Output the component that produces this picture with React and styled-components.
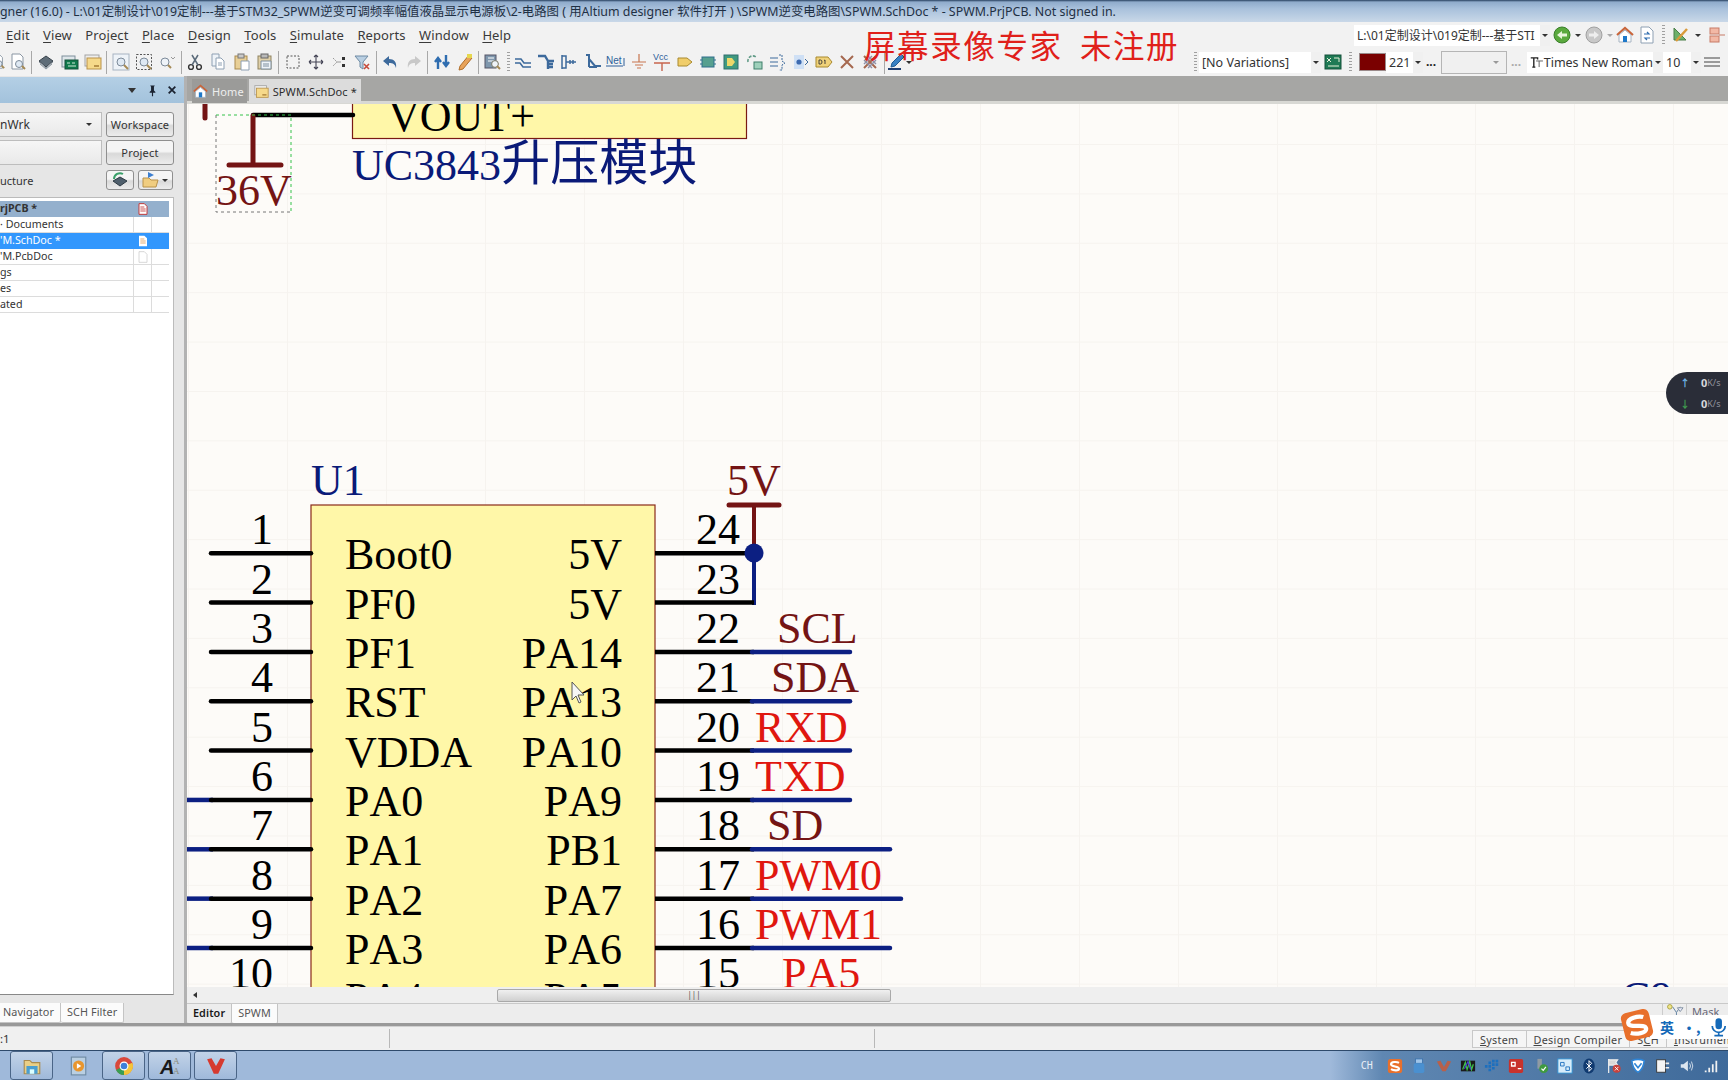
import React from "react";
import styled, { createGlobalStyle } from "styled-components";

const uiFont = `"Noto Sans", "Noto Sans CJK SC", sans-serif`;

const GlobalStyle = createGlobalStyle`
  html, body { margin: 0; padding: 0; background: #f0f0f0; }
  body { font-family: ${uiFont}; }
`;

const Win = styled.div`
  position: relative;
  display: flex;
  flex-direction: column;
  width: 1728px;
  height: 1080px;
  overflow: hidden;
  color: #2b2b2b;
`;

const TitleBar = styled.div`
  height: 22px;
  flex: none;
  line-height: 23px;
  font-size: 12.4px;
  white-space: nowrap;
  color: #1f3044;
  background: linear-gradient(#27405f 0, #8fabcb 2px, #a9c1dc 40%, #c9d8e8 100%);
`;

const Row = styled.div`
  display: flex;
  flex: none;
  align-items: center;
  height: ${(p) => p.$h}px;
  background: #f2f2f2;
  white-space: nowrap;
  overflow: hidden;
`;

const Menu = styled.div`
  display: flex;
  gap: 13.4px;
  padding-left: 6px;
  font-size: 13px;
  letter-spacing: 0.1px;
  color: #3a3a3a;
  & u { text-underline-offset: 2px; }
`;

const RightTools = styled.div`
  display: flex;
  align-items: center;
  flex: none;
  margin-left: auto;
  width: ${(p) => p.$w}px;
`;

const Slot = styled.span`
  display: inline-flex;
  flex: none;
  align-items: center;
  justify-content: center;
  width: ${(p) => p.$w || 23.15}px;
  height: 22px;
`;

const Icons = styled.div`
  display: flex;
  align-items: center;
  margin-left: ${(p) => p.$ml || 0}px;
`;

const Sep = styled.span`
  flex: none;
  width: 1px;
  height: 23px;
  margin: 0 2px;
  background: #a8a8a8;
`;

const Grip = styled.span`
  flex: none;
  width: 3px;
  height: 20px;
  margin: 0 ${(p) => p.$m || 3}px;
  background: repeating-linear-gradient(#a0a0a0 0 1px, transparent 1px 3px);
`;

const Field = styled.div`
  display: flex;
  align-items: center;
  flex: none;
  width: ${(p) => p.$w}px;
  height: 21px;
  background: #fff;
  font-size: ${(p) => p.$fs || 12.5}px;
  color: #333;
  overflow: hidden;
  padding-left: 3px;
  box-sizing: border-box;
`;

const FieldArrow = styled.span`
  display: flex;
  align-items: center;
  justify-content: center;
  flex: none;
  width: 10px;
  height: 100%;
  margin-left: auto;
  background: #f0f0f0;
  &::after {
    content: "";
    border-left: 3px solid transparent;
    border-right: 3px solid transparent;
    border-top: 3px solid #333;
  }
`;

const Caret = styled.span`
  flex: none;
  width: 0;
  height: 0;
  margin: 0 ${(p) => p.$m || 3}px;
  border-left: 3px solid transparent;
  border-right: 3px solid transparent;
  border-top: 3px solid ${(p) => p.$c || "#333"};
`;

const DockCaret = styled(Caret)`
  border-left-width: 4px;
  border-right-width: 4px;
  border-top-width: 5px;
`;

const Swatch = styled.span`
  flex: none;
  width: 27px;
  height: 18px;
  margin-left: 3px;
  background: #7a0000;
  border: 1px solid #9a8a8a;
  box-sizing: border-box;
`;

const Dots = styled.span`
  flex: none;
  width: 12px;
  margin: 0 ${(p) => p.$m || 4}px;
  font-size: 12px;
  font-weight: 700;
  line-height: 10px;
  color: ${(p) => p.$c || "#222"};
`;

const EmptyCombo = styled.div`
  display: flex;
  align-items: center;
  justify-content: flex-end;
  flex: none;
  width: 66px;
  height: 23px;
  padding-right: 4px;
  box-sizing: border-box;
  background: #f0f0f0;
  border: 1px solid #b5b5b5;
`;

const Watermark = styled.div`
  position: absolute;
  left: 864px;
  top: 25px;
  font-family: "Noto Sans CJK SC", serif;
  font-size: 31.5px;
  line-height: 38px;
  letter-spacing: 1.6px;
  color: #e0201a;
  white-space: pre;
`;

const Workspace = styled.div`
  display: flex;
  flex: 1;
  min-height: 0;
`;

const Dock = styled.div`
  display: flex;
  flex-direction: column;
  flex: none;
  width: 184px;
  background: #e6e6e6;
  border-right: 3px solid #b2b2b2;
`;

const DockHead = styled.div`
  display: flex;
  flex: none;
  align-items: center;
  justify-content: flex-end;
  gap: 7px;
  height: 26px;
  margin-top: 1px;
  padding-right: 6px;
  background: linear-gradient(#b4cfe5, #a3c2dc);
  color: #1a2230;
  font-size: 12px;
  font-weight: 700;
`;

const DockBody = styled.div`
  display: flex;
  flex-direction: column;
  flex: 1;
  min-height: 0;
  padding-top: 9px;
`;

const DockLine = styled.div`
  display: flex;
  flex: none;
  align-items: center;
  gap: 4px;
  height: 25px;
  margin-bottom: 3px;
  width: 174px;
`;

const PanelInput = styled.div`
  display: flex;
  flex: none;
  align-items: center;
  justify-content: space-between;
  box-sizing: border-box;
  width: 102px;
  height: 100%;
  padding-right: 6px;
  background: linear-gradient(#f6f6f6, #e9e9e9);
  border: 1px solid #bdbdbd;
  border-left: 0;
  font-size: 12px;
  color: #333;
`;

const PanelButton = styled.div`
  display: flex;
  flex: none;
  align-items: center;
  justify-content: center;
  box-sizing: border-box;
  width: ${(p) => p.$w || 68}px;
  height: 100%;
  border: 1px solid #8f8f8f;
  border-radius: 3px;
  background: linear-gradient(#f5f5f5 45%, #d9d9d9 55%, #ececec);
  font-size: 11px;
  letter-spacing: 0.2px;
  color: #333;
`;

const StructLine = styled(DockLine)`
  height: 20px;
  margin: 2px 0 7px;
  font-size: 11px;
  color: #333;
`;

const StructLabel = styled.span`
  flex: none;
  width: 102px;
`;

const ListBox = styled.div`
  flex: 1;
  width: 174px;
  box-sizing: border-box;
  padding-top: 3px;
  background: #fff;
  border-top: 1px solid #bbb;
  border-right: 1px solid #bbb;
  border-bottom: 1px solid #888;
  min-height: 0;
`;

const ListRow = styled.div`
  display: grid;
  grid-template-columns: 133px 18px 18px;
  width: 169px;
  height: 16px;
  box-sizing: border-box;
  line-height: 15px;
  font-size: 10.7px;
  font-weight: ${(p) => (p.$head ? 700 : 400)};
  color: ${(p) => (p.$sel ? "#fff" : "#333")};
  background: ${(p) => (p.$sel ? "#3297fd" : p.$head ? "#94b0cd" : "#fff")};
  border-bottom: 1px solid ${(p) => (p.$head || p.$sel ? "transparent" : "#dcdcdc")};
`;

const ListCell = styled.span`
  display: flex;
  align-items: center;
  justify-content: center;
  border-left: 1px solid ${(p) => (p.$plain ? "transparent" : "#dcdcdc")};
`;

const TabRow = styled.div`
  display: flex;
  flex: none;
  height: 20px;
  margin-top: 8px;
  margin-left: -3px;
  background: ${(p) => p.$bg || "#e6e6e6"};
`;

const BottomTab = styled.div`
  padding: 0 6px;
  height: 19px;
  line-height: 18px;
  font-size: 10.8px;
  letter-spacing: 0.1px;
  color: ${(p) => (p.$on ? "#1a1a1a" : "#555")};
  font-weight: ${(p) => (p.$on ? 600 : 400)};
  background: ${(p) => (p.$on ? "#ededed" : "#fbfbfb")};
  border-right: 1px solid #c4c4c4;
  border-bottom: 1px solid #c4c4c4;
  border-radius: 0 0 2px 2px;
`;

const Editor = styled.div`
  display: flex;
  flex-direction: column;
  flex: 1;
  min-width: 0;
  background: #ededed;
`;

const DocTabs = styled.div`
  display: flex;
  flex: none;
  align-items: flex-end;
  height: 28px;
  padding: 0 0 1px 5px;
  box-sizing: border-box;
  background: linear-gradient(#a6a6a4 90%, #d8d8d4 90%);
`;

const DocTab = styled.div`
  display: flex;
  align-items: center;
  gap: 4px;
  height: 24px;
  margin-right: 2px;
  padding: 0 ${(p) => (p.$on ? 4 : 3)}px 0 ${(p) => (p.$on ? 5 : 1)}px;
  font-size: 11px;
  letter-spacing: 0.1px;
  color: ${(p) => (p.$on ? "#2c2c2c" : "#eee")};
  background: ${(p) => (p.$on ? "#dcdcdc" : "#9b9b99")};
`;

const Canvas = styled.div`
  position: relative;
  flex: 1;
  min-height: 0;
  overflow: hidden;
  background-color: #fdfbf8;
  background-image:
    linear-gradient(90deg, #f6f3ef 1px, transparent 1px),
    linear-gradient(#f6f3ef 1px, transparent 1px);
  background-size: 99px 49.4px;
  background-position: 1px 40px;
`;

const Sheet = styled.svg`
  display: block;
  width: 100%;
  height: 100%;
`;

const Txt = styled.text`
  font-family: "Liberation Serif", "Noto Sans CJK SC", serif;
  font-size: ${(p) => p.$size || 44}px;
  font-kerning: none;
  fill: ${(p) => p.$c || "#000"};
  text-anchor: ${(p) => p.$anchor || "start"};
`;

const ScrollRow = styled.div`
  display: flex;
  flex: none;
  align-items: center;
  height: 16px;
  padding-left: 6px;
  border-bottom: 1px solid #c9c9c9;
  background: #efefef;
`;

const ScrollArrow = styled.span`
  flex: none;
  width: 0;
  height: 0;
  margin-right: 300px;
  border-top: 3px solid transparent;
  border-bottom: 3px solid transparent;
  border-right: 4px solid #333;
`;

const ScrollThumb = styled.div`
  display: flex;
  align-items: center;
  justify-content: center;
  flex: none;
  width: 394px;
  height: 13px;
  box-sizing: border-box;
  border: 1px solid #a9a9a9;
  border-radius: 2px;
  background: linear-gradient(#f0f0f0, #d0d0d0);
  font-size: 8px;
  line-height: 10px;
  color: #555;
`;

const EditorTabs = styled(TabRow)`
  margin: 0;
  background: #ededed;
  height: 19px;
  align-items: flex-start;
`;

const MaskFilter = styled.div`
  display: flex;
  align-items: center;
  margin-left: auto;
  height: 17px;
  padding: 0 2px 0 4px;
  border-left: 1px solid #ccc;
`;

const Mask = styled.div`
  flex: none;
  width: 36px;
  height: 17px;
  line-height: 16px;
  padding-left: 5px;
  font-size: 11px;
  color: #667;
  border-left: 1px solid #ccc;
  overflow: hidden;
`;

const SplitLine = styled.div`
  flex: none;
  height: 4px;
  background: linear-gradient(#999 0 75%, #d0d0d0 75%);
`;

const StatusBar = styled.div`
  display: flex;
  flex: none;
  align-items: center;
  height: 23px;
  background: #f0f0f0;
  font-size: 11.5px;
  color: #333;
`;

const StatusCell = styled.div`
  flex: none;
  box-sizing: border-box;
  width: ${(p) => p.$w}px;
  height: 19px;
  line-height: 19px;
  border-right: 1px solid #b8b8b8;
`;

const StatusTabs = styled.div`
  display: flex;
  flex: none;
  margin-left: auto;
  height: 18px;
  overflow: hidden;
  width: 256px;
`;

const StatusTab = styled.div`
  flex: none;
  padding: 0 7px;
  line-height: 17px;
  font-size: 10.8px;
  letter-spacing: 0.3px;
  color: #444;
  background: #f5f5f5;
  border: 1px solid #c8c8c8;
  border-left-width: ${(p) => (p.$first ? 1 : 0)}px;
`;

const Taskbar = styled.div`
  display: flex;
  flex: none;
  align-items: center;
  height: 30px;
  padding-left: 10px;
  box-sizing: border-box;
  border-top: 1px solid #2e4a6b;
  background: linear-gradient(90deg, #9fb9da 0, #9fb9da 77%, #5f87b2 80%, #3f6a9a 100%);
`;

const TaskButton = styled.div`
  display: flex;
  align-items: center;
  justify-content: center;
  flex: none;
  box-sizing: border-box;
  width: 43px;
  height: 29px;
  margin-right: 3px;
  border-radius: 3px;
  border: 1px solid ${(p) => (p.$flat ? "transparent" : "#4a6587")};
  background: ${(p) => (p.$flat ? "transparent" : "linear-gradient(#c2d3e8, #9fb9da)")};
`;

const Tray = styled.div`
  display: flex;
  align-items: center;
  margin-left: auto;
  padding-right: 5px;
`;

const TrayText = styled.span`
  display: inline-block;
  width: 22px;
  font-family: "DejaVu Sans Mono", monospace;
  font-size: 10px;
  color: #e8eef6;
`;

const TraySlot = styled(Slot)`
  width: 24.3px;
`;

const Speed = styled.div`
  position: absolute;
  left: 1666px;
  top: 372px;
  width: 70px;
  height: 42px;
  display: grid;
  grid-template-rows: 1fr 1fr;
  padding-left: 14px;
  box-sizing: border-box;
  border-radius: 21px 0 0 21px;
  background: #2a2d38;
  color: #d8d8dc;
`;

const SpeedRow = styled.div`
  display: flex;
  align-items: center;
  font-size: 11px;
  font-weight: 700;
  & small {
    font-size: 9px;
    font-weight: 400;
    color: #8f929c;
  }
`;

const SpeedArrow = styled.span`
  flex: none;
  width: 21px;
  font-size: 10px;
  color: ${(p) => p.$c};
`;

const Sogou = styled.div`
  position: absolute;
  left: 1650px;
  top: 1015px;
  display: flex;
  align-items: center;
  gap: 8px;
  box-sizing: border-box;
  width: 78px;
  height: 24px;
  padding-left: 10px;
  background: #fff;
  font-family: "Noto Sans CJK SC", sans-serif;
  font-size: 14px;
  font-weight: 700;
  color: #1469b8;
`;

const SogouLogo = styled.div`
  position: absolute;
  left: 1621px;
  top: 1009px;
  width: 32px;
  height: 32px;
  transform: rotate(-14deg);
`;

const S = ({ s = 18, children, vb = "0 0 18 18" }) => (
  <svg width={s} height={s} viewBox={vb} fill="none">
    {children}
  </svg>
);

const magnifier = (
  <>
    <circle cx="9" cy="9" r="4" fill="#dfe9f3" stroke="#7c8a99" />
    <path d="M12 12l4 4" stroke="#a58a55" strokeWidth="2" />
  </>
);

// toolbar and tray drawings, keyed by name
const icons = {
  page: (
    <>
      <path d="M3 1h8l3 3v12H3z" fill="#fff" stroke="#8a96a3" />
      <circle cx="10" cy="11" r="3.5" fill="#dfe9f3" stroke="#7c8a99" />
      <path d="M13 13l3 3" stroke="#a58a55" strokeWidth="2" />
    </>
  ),
  chip: (
    <>
      <path d="M9 3l7 5-7 6-7-6z" fill="#5f6d78" stroke="#39434c" />
      <path d="M2 9l7 6 7-6M3 11l6 5 6-5" stroke="#8d98a1" />
    </>
  ),
  pcb: (
    <>
      <rect x="1" y="3" width="13" height="11" fill="#dfe6ea" stroke="#7f8f9b" />
      <rect x="4" y="7" width="13" height="9" fill="#0f7a4c" stroke="#14503a" />
      <path d="M6 10h3M11 10h3M7 13h8" stroke="#cfe9d8" />
    </>
  ),
  sheets: (
    <>
      <rect x="1" y="2" width="14" height="11" fill="#eee" stroke="#a3a3a3" />
      <rect x="3" y="5" width="14" height="11" fill="#f6d98a" stroke="#b9924a" />
      <path d="M10 12h5v2h-5z" fill="#b9924a" />
    </>
  ),
  zoom: (
    <>
      <rect x="1" y="1" width="16" height="16" fill="#eef3f8" stroke="#a7b4c2" />
      {magnifier}
    </>
  ),
  zoomSel: (
    <>
      <rect x="1.5" y="1.5" width="15" height="15" stroke="#555" strokeDasharray="2 1.5" />
      {magnifier}
    </>
  ),
  zoomAlt: (
    <>
      <circle cx="7" cy="9" r="4" fill="#eef3f8" stroke="#7c8a99" />
      <path d="M10 12l3 3" stroke="#a58a55" strokeWidth="2" />
      <path d="M13 4l2 2 2-2" stroke="#999" />
    </>
  ),
  cut: (
    <>
      <circle cx="5" cy="14" r="2.4" stroke="#333" strokeWidth="1.4" />
      <circle cx="13" cy="14" r="2.4" stroke="#333" strokeWidth="1.4" />
      <path d="M6 12L12 2M12 12L6 2" stroke="#5b6b7a" strokeWidth="1.5" />
    </>
  ),
  copy: (
    <>
      <path d="M3 1h7v12H3z" fill="#eef3f8" stroke="#8ea0b3" />
      <path d="M7 5h5l3 3v8H7z" fill="#fff" stroke="#8ea0b3" />
      <path d="M9 10h4M9 12h4" stroke="#8ea0b3" />
    </>
  ),
  paste: (
    <>
      <rect x="2" y="3" width="12" height="13" fill="#e8cf96" stroke="#a98a4e" />
      <rect x="5" y="1" width="6" height="4" fill="#c9c9c9" stroke="#777" />
      <path d="M8 8h8v9H8z" fill="#fff" stroke="#8ea0b3" />
    </>
  ),
  paste2: (
    <>
      <rect x="2" y="3" width="13" height="13" fill="#e0d0a8" stroke="#8f8360" />
      <rect x="5" y="1" width="7" height="4" fill="#b9b9b9" stroke="#666" />
      <path d="M5 8h10v8H5z" fill="#eef3f8" stroke="#7f8f9f" />
      <path d="M7 11h6M7 13h6" stroke="#7f8f9f" />
    </>
  ),
  select: <rect x="3" y="3" width="12" height="12" stroke="#555" strokeDasharray="2 1.5" />,
  move: (
    <path
      d="M9 2v14M2 9h14M9 2l-2 2M9 2l2 2M9 16l-2-2M9 16l2-2M2 9l2-2M2 9l2 2M16 9l-2-2M16 9l-2 2"
      stroke="#445"
      strokeWidth="1.1"
    />
  ),
  selMove: (
    <>
      <path d="M3 5l4 4-4 4" stroke="#999" strokeDasharray="2 1" />
      <path d="M7 9h4" stroke="#999" />
      <rect x="12" y="4" width="3" height="3" fill="#333" />
      <rect x="12" y="11" width="3" height="3" fill="#333" />
    </>
  ),
  filter: (
    <>
      <path d="M2 3h13l-5 6v7l-3-2V9z" fill="#b9cfe2" stroke="#6e8aa3" />
      <path d="M11 11l5 5M16 11l-5 5" stroke="#c74a3a" strokeWidth="1.6" />
    </>
  ),
  undo: <path d="M8 3L2 8l6 5v-3c4 0 6 1 7 5 1-6-2-9-7-9z" fill="#3d6a9c" />,
  redo: <path d="M10 3l6 5-6 5v-3c-4 0-6 1-7 5-1-6 2-9 7-9z" fill="#c8c8c8" />,
  updown: (
    <>
      <path d="M5 16V6M2 9l3-4 3 4" stroke="#2f6db0" strokeWidth="2.4" />
      <path d="M13 2v10M10 9l3 4 3-4" stroke="#2f6db0" strokeWidth="2.4" />
    </>
  ),
  pencil: (
    <>
      <path d="M13 2l3 3-9 11-4 1 1-4z" fill="#e8a35a" stroke="#b06f2b" />
      <rect x="11" y="1" width="5" height="4" fill="#e6d84f" />
    </>
  ),
  inspect: (
    <>
      <rect x="1" y="2" width="11" height="13" fill="#7f97ad" stroke="#556" />
      <path d="M4 5h6M4 8h6" stroke="#fff" />
      <circle cx="11" cy="11" r="3.4" fill="#eef3f8" stroke="#776" />
      <path d="M13 13l3 3" stroke="#a58a55" strokeWidth="2" />
    </>
  ),
  wire: <path d="M1 6h6l3 4h7M1 10h5l3 4h8" stroke="#3d6a9c" strokeWidth="1.6" />,
  bus: <path d="M1 3h7l3 5v8M11 8h6M11 11h5M11 14h5" stroke="#3d6a9c" strokeWidth="2.4" />,
  harness: <path d="M2 2v14M2 3h4v12H2M6 9h10M10 7v4M13 7v4" stroke="#3d6a9c" strokeWidth="1.5" />,
  busEntry: <path d="M2 2h3v12M5 6l6 7h6M5 14h8" stroke="#3d6a9c" strokeWidth="2" />,
  gnd: <path d="M9 1v8M2 9h14M5 12h8M7 15h4" stroke="#c7754e" strokeWidth="1.2" />,
  port: <path d="M2 5h9l5 4-5 4H2z" fill="#f0cd6a" stroke="#a98a2f" />,
  sheet: (
    <>
      <rect x="3" y="4" width="12" height="10" fill="#57a08f" stroke="#2f6f8c" />
      <path d="M1 7h2M1 11h2M15 7h2M15 11h2" stroke="#2f6f8c" />
    </>
  ),
  sheetPort: (
    <>
      <rect x="2" y="2" width="14" height="14" fill="#3f9a7f" stroke="#2f6f6f" />
      <path d="M5 5h5l3 4-3 4H5z" fill="#ecd86a" />
    </>
  ),
  recycle: (
    <>
      <path d="M2 9a5 5 0 0 1 8-5" stroke="#5f9a86" strokeWidth="1.6" strokeDasharray="3 1.4" />
      <rect x="8" y="9" width="8" height="7" fill="#9fd0bb" stroke="#3e7f6a" />
    </>
  ),
  entries: (
    <>
      <path d="M1 5h8M1 9h8M1 13h8" stroke="#3d6a9c" />
      <path d="M10 2h3v6l3 2-3 2v5h-3" stroke="#3d6a9c" strokeDasharray="2 1" />
    </>
  ),
  dotPort: (
    <>
      <rect x="2" y="2" width="10" height="14" fill="#cfe0f5" />
      <circle cx="7" cy="9" r="2.6" fill="#3d6ab0" />
      <path d="M13 6l3 3-3 3" stroke="#3d6a9c" />
    </>
  ),
  device: (
    <>
      <path d="M1 4h12l4 5-4 5H1z" fill="#f0d27a" stroke="#a98a2f" />
      <path d="M4 7v4h1.5q1.5 0 1.5-2t-1.5-2zM9 7.5l1-.5v4" stroke="#333" strokeWidth=".9" />
    </>
  ),
  cross: <path d="M3 3l12 12M15 3L3 15" stroke="#a5684f" strokeWidth="2" />,
  crossAll: (
    <>
      <path d="M3 3l12 12M15 3L3 15" stroke="#a5684f" strokeWidth="2" />
      <path d="M3 7l8 8M7 3l8 8M15 7l-8 8M11 3L3 11" stroke="#8f8fa5" strokeWidth="1.4" />
    </>
  ),
  pen: (
    <>
      <path d="M14 1l3 3-9 9-4 1 1-4z" fill="#3a82c4" stroke="#1f5b93" />
      <path d="M1 16h13" stroke="#1f3f73" strokeWidth="2" />
    </>
  ),
  back: (
    <>
      <circle cx="9" cy="9" r="8" fill="#5aa93e" stroke="#3a7f2a" />
      <path d="M4 9l5-4v2.5h5v3H9V13z" fill="#e8f5dc" />
    </>
  ),
  forward: (
    <>
      <circle cx="9" cy="9" r="8" fill="#c8c8c8" stroke="#a0a0a0" />
      <path d="M14 9L9 5v2.5H4v3h5V13z" fill="#eee" />
    </>
  ),
  home: (
    <>
      <path d="M1 9l8-7 8 7" stroke="#c9653a" strokeWidth="2.2" />
      <path d="M3 9v7h12V9L9 4z" fill="#fff" stroke="#a7b4c2" />
      <rect x="7" y="10" width="4" height="6" fill="#1e78c8" />
    </>
  ),
  sync: (
    <>
      <path d="M3 1h8l4 4v12H3z" fill="#fff" stroke="#8ea0b3" />
      <path d="M6 8h5l-2-2M12 12H7l2 2" stroke="#2f6db0" strokeWidth="1.2" />
    </>
  ),
  ruler: (
    <>
      <path d="M3 2l12 12H3z" fill="#6db06a" stroke="#4a7f48" />
      <path d="M5 15L16 3" stroke="#d99a3a" strokeWidth="2.5" />
    </>
  ),
  split: (
    <>
      <rect x="3" y="2" width="9" height="6" fill="#f2b8a5" stroke="#c77b66" />
      <rect x="3" y="10" width="9" height="6" fill="#f2b8a5" stroke="#c77b66" />
      <path d="M12 9h6" stroke="#c77b66" />
    </>
  ),
  variant: (
    <>
      <rect x="1" y="2" width="16" height="14" fill="#1f7a55" stroke="#14503a" />
      <path d="M3 5l4 4M7 5L3 9M10 5h5v4M4 13h11" stroke="#e8f0d8" />
    </>
  ),
  lines: <path d="M1 5h16M1 9h16M1 13h16" stroke="#9a9a9a" strokeWidth="1.8" />,
  font: (
    <>
      <path d="M1 3h9v2M5 3v12M3 15h4" stroke="#222" strokeWidth="1.8" />
      <path d="M8 7h9M12 7v8" stroke="#666" strokeWidth="1.3" />
    </>
  ),
  docRed: (
    <>
      <path d="M3 1h8l4 4v12H3z" fill="#fff" stroke="#c23b3b" strokeWidth="1.5" />
      <path d="M5 6h6M5 9h8M5 12h8" stroke="#c23b3b" strokeWidth="1.3" />
    </>
  ),
  docWhite: (
    <>
      <path d="M3 1h8l4 4v12H3z" fill="#fff" />
      <path d="M5 6h6M5 9h8M5 12h8" stroke="#e0a060" strokeWidth="1.3" />
    </>
  ),
  docBlank: <path d="M3 1h8l4 4v12H3z" fill="#fff" stroke="#c4c4c4" />,
  chipBtn: (
    <>
      <path d="M9 6l7 4-7 5-7-5z" fill="#4f5f6c" stroke="#2e3a44" />
      <path d="M3 8a6 6 0 0 1 9-5" stroke="#3aa06a" strokeWidth="2" />
    </>
  ),
  folderBlue: (
    <>
      <path d="M1 7h6l2 2h7l-2 7H1z" fill="#f0cd80" stroke="#b9924a" />
      <path d="M6 1v6l6-3z" fill="#3d7fd0" />
    </>
  ),
  pin: <path d="M6 2h6v1h-1v6l2 2v1H5v-1l2-2V3H6zM8.2 12h1.6v5H8.2z" fill="#1a2230" />,
  close: <path d="M4 4l10 10M14 4L4 14" stroke="#1a2230" strokeWidth="2.6" />,
  filterDot: (
    <>
      <circle cx="3" cy="3" r="2.4" fill="#f0e68a" stroke="#a9a040" />
      <path d="M6 3l4 6v6M10 9l4-6" stroke="#5f7f9f" />
      <path d="M11 4h6l-3 4z" fill="#eef" stroke="#7f8f9f" />
    </>
  ),
  folder: (
    <>
      <path d="M2 4h5l2 2h7v10H2z" fill="#e9cf87" stroke="#a98a4e" />
      <rect x="4" y="9" width="10" height="7" fill="#4a9ed0" />
      <rect x="7" y="12" width="4" height="4" fill="#dff" />
    </>
  ),
  media: (
    <>
      <rect x="3" y="1" width="13" height="16" fill="#b9cfe2" stroke="#6e8aa3" />
      <circle cx="9.5" cy="9" r="5" fill="#e8962e" />
      <path d="M8 6.5l4 2.5-4 2.500z" fill="#fff" />
    </>
  ),
  chrome: (
    <>
      <circle cx="9" cy="9" r="8" fill="#d9483b" />
      <path d="M9 9L1.8 12.5A8 8 0 0 0 9 17z" fill="#3a9e52" />
      <path d="M9 9v8a8 8 0 0 0 7.5-11z" fill="#f3c53a" />
      <circle cx="9" cy="9" r="3.5" fill="#3f7fd8" stroke="#fff" />
    </>
  ),
  wps: <path d="M1 3l4-1 4 7 4-7 4 1-6 13H7z" fill="#d63a2f" />,
  sogou: (
    <>
      <rect x="1" y="1" width="16" height="16" rx="3" fill="#e8702c" />
      <path d="M13.500 5.500C11 4 4.500 4 4.500 7S13.500 9 13.500 12 7 14 4.500 12.500" stroke="#fff" strokeWidth="2.400" />
    </>
  ),
  usb: (
    <>
      <rect x="5" y="1" width="8" height="5" fill="#9fc4e8" stroke="#3d74ad" />
      <rect x="3" y="6" width="12" height="11" rx="2" fill="#4a90d0" />
    </>
  ),
  wpsTray: <path d="M1 4l4-1 4 7 4-7 4 1-6 11H7z" fill="#b8604a" />,
  color: (
    <>
      <rect x="1" y="3" width="16" height="12" fill="#1a1a1a" />
      <path d="M3 13L6 5l2 8 3-9 2 9 2-6" stroke="#3fc04f" strokeWidth="1.4" />
      <path d="M5 12l4-8 3 9" stroke="#4a3fd0" strokeWidth="1.4" />
    </>
  ),
  grid: (
    <path
      d="M5 4h3v3H5zM9 2h3v3H9zM13 2h3v3h-3zM1 8h3v3H1zM5 8h3v3H5zM9 6h3v3H9zM13 6h3v3h-3zM5 12h3v3H5zM9 10h3v3H9z"
      fill="#1c6fbe"
    />
  ),
  redApp: (
    <>
      <rect x="1" y="1" width="16" height="16" rx="2" fill="#c8322c" />
      <path d="M4 5h4v4H4zM11 12h4" stroke="#fff" strokeWidth="1.5" />
    </>
  ),
  usbCheck: (
    <>
      <rect x="5" y="1" width="5" height="11" fill="#8f9aa3" />
      <circle cx="12" cy="12" r="5" fill="#3f9a3f" />
      <path d="M9.5 12l2 2 3-4" stroke="#fff" strokeWidth="1.3" />
    </>
  ),
  blueBox: (
    <>
      <rect x="1" y="1" width="16" height="16" fill="#d7ecfa" stroke="#2d8fd0" />
      <path d="M4 5h4v4H4zM10 10h4v4h-4z" stroke="#1c6fbe" />
    </>
  ),
  bluetooth: (
    <>
      <ellipse cx="9" cy="9" rx="6.5" ry="8.5" fill="#103a70" />
      <path d="M6 6l6 6-3 3V3l3 3-6 6" stroke="#fff" strokeWidth="1.1" />
    </>
  ),
  flag: (
    <>
      <path d="M3 1v16M3 2h10l-2 3 2 3H3" stroke="#eee" strokeWidth="1.4" fill="#d8d8d8" />
      <circle cx="12" cy="12" r="4.5" fill="#c8423c" />
      <path d="M10 10l4 4M14 10l-4 4" stroke="#fff" />
    </>
  ),
  shield: (
    <>
      <path d="M2 3q7-3 14 0-1 10-7 13Q3 13 2 3z" fill="#fff" stroke="#2f85d6" strokeWidth="1.8" />
      <path d="M5 6l4 5 4-5" stroke="#2f85d6" strokeWidth="1.8" />
    </>
  ),
  plug: (
    <>
      <rect x="3" y="2" width="10" height="14" fill="#f4f4f4" stroke="#333" />
      <path d="M13 6h4M13 11h4" stroke="#eee" strokeWidth="1.8" />
    </>
  ),
  speaker: (
    <>
      <path d="M2 7h3l5-4v12l-5-4H2z" fill="#dce6f0" />
      <path d="M12 6q2 3 0 6M14 4q3 5 0 10" stroke="#dce6f0" />
    </>
  ),
  signal: <path d="M2 14h2v2H2zM6 11h2v5H6zM10 7h2v9h-2zM14 3h2v13h-2z" fill="#f2f2f2" />,
  mic: (
    <>
      <rect x="6" y="1" width="6" height="10" rx="3" fill="#1469b8" />
      <path d="M3 8a6 6 0 0 0 12 0M9 14v3M5 17h8" stroke="#1469b8" strokeWidth="1.6" />
    </>
  ),
};

const Ico = ({ k, s }) => <S s={s}>{icons[k]}</S>;

const NetIcon = () => (
  <svg width="20" height="18" viewBox="0 0 20 18">
    <text x="0" y="11" fontFamily="Liberation Sans" fontSize="10" fill="#2f5f9a">
      Net
    </text>
    <path d="M0 13h17M18 5v8" stroke="#2f5f9a" />
  </svg>
);

const VccIcon = () => (
  <svg width="20" height="20" viewBox="0 0 20 20">
    <text x="1" y="8" fontFamily="Liberation Sans" fontSize="9" fill="#2f5f9a">
      Vcc
    </text>
    <path d="M2 11h16M10 11v8" stroke="#c7654e" strokeWidth="1.4" />
  </svg>
);

const FontApp = () => (
  <svg width="22" height="22" viewBox="0 0 22 22">
    <text x="14" y="9" fontFamily="Liberation Serif" fontSize="9" fill="#8a8a7a">A</text>
    <text x="14" y="19" fontFamily="Liberation Serif" fontSize="9" fill="#8a8a7a">A</text>
    <text x="1" y="19" fontFamily="Liberation Sans" fontWeight="700" fontStyle="italic" fontSize="20" fill="#1a1a1a">A</text>
  </svg>
);

const toolbar = [
  ["page", 16], ["page"], "|", ["chip"], ["pcb", 25], ["sheets", 22], "|",
  ["zoom"], ["zoomSel"], ["zoomAlt"], "|", ["cut"], ["copy"], ["paste"], ["paste2"], "|",
  ["select"], ["move"], ["selMove"], ["filter"], "|", ["undo"], ["redo"], "|",
  ["updown"], ["pencil"], "|", ["inspect"], "grip",
  ["wire"], ["bus"], ["harness"], ["busEntry"], ["net"], ["gnd"], ["vcc"], ["port"],
  ["sheet"], ["sheetPort"], ["recycle"], ["entries"], ["dotPort"], ["device"], ["cross"], ["crossAll"], "|", ["pen", 18],
];

const Tools = () => (
  <Icons $ml={-10}>
    {toolbar.map((t, i) => {
      if (t === "|") return <Sep key={i} />;
      if (t === "grip") return <Grip key={i} $m={2} />;
      const [k, w] = t;
      return (
        <Slot key={i} $w={w}>
          {k === "net" ? <NetIcon /> : k === "vcc" ? <VccIcon /> : <Ico k={k} />}
        </Slot>
      );
    })}
    <Caret $m={1} />
  </Icons>
);

const pinStep = 49.35;
const pinY = (i) => 553.2 + i * pinStep;

const leftPins = [
  ["1", "Boot0"], ["2", "PF0"], ["3", "PF1"], ["4", "RST"], ["5", "VDDA"],
  ["6", "PA0", true], ["7", "PA1", true], ["8", "PA2", true], ["9", "PA3", true], ["10", "PA4", true],
];

const dark = "#741414";
const red = "#e0170f";
const navy = "#0a1a78";
const wireBlue = "#0c1f82";

const rightPins = [
  ["24", "5V"],
  ["23", "5V"],
  ["22", "PA14", "SCL", 777, 850, dark],
  ["21", "PA13", "SDA", 771, 850, dark],
  ["20", "PA10", "RXD", 755, 850, red],
  ["19", "PA9", "TXD", 755, 850, red],
  ["18", "PB1", "SD", 767, 890, dark],
  ["17", "PA7", "PWM0", 755, 901, red],
  ["16", "PA6", "PWM1", 755, 890, red],
  ["15", "PA5", "PA5", 782, 890, red],
];

const Schematic = () => (
  <Sheet viewBox="187 104 1541 883" preserveAspectRatio="xMinYMin slice" fill="none">
    {/* boost module fragment */}
    <rect x="352.5" y="90" width="394" height="48.5" fill="#fff7a8" stroke="#7a1a14" strokeWidth="1.2" />
    <Txt x="388" y="131">VOUT+</Txt>
    <path d="M253 115h100" stroke="#000" strokeWidth="4.5" strokeLinecap="round" />
    <path d="M205 104v14" stroke={dark} strokeWidth="5" strokeLinecap="round" />
    <path d="M253 116v48M229 165h52" stroke={dark} strokeWidth="5" strokeLinecap="round" />
    <path d="M216 115v97h75" stroke="#777" strokeDasharray="3 3" />
    <path d="M216 115h75v97" stroke="#35c24a" strokeDasharray="3 3" />
    <Txt x="216" y="205" $c={dark}>36V</Txt>
    <Txt x="352" y="180" $c={navy}>
      UC3843<tspan fontSize="49">升压模块</tspan>
    </Txt>

    {/* U1 body */}
    <rect x="311" y="505" width="344" height="520" fill="#fff7a8" stroke="#8a2a1a" strokeWidth="1.2" />
    <Txt x="311" y="495" $c={navy}>U1</Txt>
    <Txt x="727" y="495" $c={dark}>5V</Txt>

    <path d="M729 505h50" stroke={dark} strokeWidth="5" strokeLinecap="round" />
    <path d="M754 505v48" stroke={dark} strokeWidth="4" />
    <path d="M754 553v52" stroke={wireBlue} strokeWidth="4" />

    {leftPins.map(([num, name, netted], i) => (
      <g key={num}>
        {netted && <path d={`M187 ${pinY(i)}h26`} stroke={wireBlue} strokeWidth="4.5" />}
        <path d={`M211 ${pinY(i)}h100`} stroke="#000" strokeWidth="4.5" strokeLinecap="round" />
        <Txt x="273" y={pinY(i) - 9} $anchor="end">{num}</Txt>
        <Txt x="345" y={pinY(i) + 16}>{name}</Txt>
      </g>
    ))}

    {rightPins.map(([num, name, net, nx, end, col], i) => (
      <g key={num}>
        <path d={`M655 ${pinY(i)}h99`} stroke="#000" strokeWidth="4.5" />
        {net && <path d={`M752 ${pinY(i)}H${end}`} stroke={wireBlue} strokeWidth="4.5" strokeLinecap="round" />}
        <Txt x="740" y={pinY(i) - 9} $anchor="end">{num}</Txt>
        <Txt x="622" y={pinY(i) + 16} $anchor="end">{name}</Txt>
        {net && <Txt x={nx} y={pinY(i) - 9} $c={col}>{net}</Txt>}
      </g>
    ))}

    <circle cx="754" cy="553" r="9.5" fill={wireBlue} />
    <Txt x="1621" y="1012" $c={navy}>C9</Txt>
    <path d="M572 682v18l4-4 3 7 2-1-3-7h6z" fill="#f6f6f6" stroke="#555" />
  </Sheet>
);

const listRows = [
  { name: "rjPCB *", head: true, icon: "docRed" },
  { name: "· Documents" },
  { name: "'M.SchDoc *", sel: true, icon: "docWhite" },
  { name: "'M.PcbDoc", icon: "docBlank" },
  { name: "gs" },
  { name: "es" },
  { name: "ated" },
];

const tray = [
  "sogou", "usb", "wpsTray", "color", "grid", "redApp", "usbCheck", "blueBox",
  "bluetooth", "flag", "shield", "plug", "speaker", "signal",
];

export default function App() {
  return (
    <>
      <GlobalStyle />
      <Win>
        <TitleBar>
          gner (16.0) - L:\01定制设计\019定制---基于STM32_SPWM逆变可调频率幅值液晶显示电源板\2-电路图 ( 用Altium designer 软件打开 ) \SPWM逆变电路图\SPWM.SchDoc * - SPWM.PrjPCB. Not signed in.
        </TitleBar>

        <Row $h={26}>
          <Menu>
            <span><u>E</u>dit</span>
            <span><u>V</u>iew</span>
            <span>Proje<u>c</u>t</span>
            <span><u>P</u>lace</span>
            <span><u>D</u>esign</span>
            <span><u>T</u>ools</span>
            <span><u>S</u>imulate</span>
            <span><u>R</u>eports</span>
            <span><u>W</u>indow</span>
            <span><u>H</u>elp</span>
          </Menu>
          <RightTools $w={374}>
            <Field $w={196} $fs={12}>
              L:\01定制设计\019定制---基于STI
              <FieldArrow />
            </Field>
            <Slot $w={24}><Ico k="back" /></Slot>
            <Caret $m={1} />
            <Slot $w={24}><Ico k="forward" /></Slot>
            <Caret $m={1} $c="#aaa" />
            <Slot $w={22}><Ico k="home" /></Slot>
            <Slot $w={22}><Ico k="sync" /></Slot>
            <Grip $m={4} />
            <Slot $w={22}><Ico k="ruler" /></Slot>
            <Caret $m={4} />
            <Slot $w={22}><Ico k="split" /></Slot>
          </RightTools>
        </Row>

        <Row $h={28}>
          <Tools />
          <RightTools $w={536}>
            <Grip $m={2} />
            <Field $w={122}>
              [No Variations]
              <FieldArrow />
            </Field>
            <Slot $w={24}><Ico k="variant" /></Slot>
            <Grip $m={4} />
            <Swatch />
            <Field $w={37}>
              221
              <FieldArrow />
            </Field>
            <Dots $m={3}>...</Dots>
            <EmptyCombo><Caret $c="#999" /></EmptyCombo>
            <Dots $m={4} $c="#aaa">...</Dots>
            <Field $w={136}>
              <Ico k="font" s={15} />
              Times New Roman
              <FieldArrow />
            </Field>
            <Field $w={38}>
              10
              <FieldArrow />
            </Field>
            <Slot $w={22}><Ico k="lines" /></Slot>
          </RightTools>
        </Row>

        <Workspace>
          <Dock>
            <DockHead>
              <DockCaret $m={0} />
              <Ico k="pin" s={13} />
              <Ico k="close" s={12} />
            </DockHead>
            <DockBody>
              <DockLine>
                <PanelInput>nWrk<Caret $m={0} /></PanelInput>
                <PanelButton>Workspace</PanelButton>
              </DockLine>
              <DockLine>
                <PanelInput />
                <PanelButton>Project</PanelButton>
              </DockLine>
              <StructLine>
                <StructLabel>ucture</StructLabel>
                <PanelButton $w={28}><Ico k="chipBtn" /></PanelButton>
                <PanelButton $w={35}>
                  <Ico k="folderBlue" />
                  <Caret $m={2} />
                </PanelButton>
              </StructLine>
              <ListBox>
                {listRows.map((r) => (
                  <ListRow key={r.name} $head={r.head} $sel={r.sel}>
                    <span>{r.name}</span>
                    <ListCell $plain={r.head || r.sel}>{r.icon && <Ico k={r.icon} s={12} />}</ListCell>
                    <ListCell $plain={r.head || r.sel} />
                  </ListRow>
                ))}
              </ListBox>
              <TabRow>
                <BottomTab>Navigator</BottomTab>
                <BottomTab>SCH Filter</BottomTab>
              </TabRow>
            </DockBody>
          </Dock>

          <Editor>
            <DocTabs>
              <DocTab>
                <Ico k="home" s={15} />
                Home
              </DocTab>
              <DocTab $on>
                <Ico k="sheets" s={15} />
                SPWM.SchDoc *
              </DocTab>
            </DocTabs>
            <Canvas>
              <Schematic />
            </Canvas>
            <ScrollRow>
              <ScrollArrow />
              <ScrollThumb>|||</ScrollThumb>
            </ScrollRow>
            <EditorTabs>
              <BottomTab $on>Editor</BottomTab>
              <BottomTab>SPWM</BottomTab>
              <MaskFilter><Ico k="filterDot" s={17} /></MaskFilter>
              <Mask>Mask</Mask>
            </EditorTabs>
          </Editor>
        </Workspace>

        <SplitLine />
        <StatusBar>
          <StatusCell $w={390}>:1</StatusCell>
          <StatusCell $w={485} />
          <StatusTabs>
            <StatusTab $first><u>S</u>ystem</StatusTab>
            <StatusTab><u>D</u>esign Compiler</StatusTab>
            <StatusTab>S<u>C</u>H</StatusTab>
            <StatusTab><u>I</u>nstruments</StatusTab>
          </StatusTabs>
        </StatusBar>

        <Taskbar>
          <TaskButton><Ico k="folder" s={20} /></TaskButton>
          <TaskButton $flat><Ico k="media" s={20} /></TaskButton>
          <TaskButton><Ico k="chrome" s={20} /></TaskButton>
          <TaskButton><FontApp /></TaskButton>
          <TaskButton><Ico k="wps" s={20} /></TaskButton>
          <Tray>
            <TrayText>CH</TrayText>
            {tray.map((k) => (
              <TraySlot key={k}><Ico k={k} s={16} /></TraySlot>
            ))}
          </Tray>
        </Taskbar>

        <Watermark>屏幕录像专家  未注册</Watermark>
        <Speed>
          <SpeedRow><SpeedArrow $c="#6fb6e8">↑</SpeedArrow>0<small>K/s</small></SpeedRow>
          <SpeedRow><SpeedArrow $c="#3f9a4f">↓</SpeedArrow>0<small>K/s</small></SpeedRow>
        </Speed>
        <Sogou>
          英<span>•,</span>
          <Ico k="mic" s={20} />
        </Sogou>
        <SogouLogo><Ico k="sogou" s={32} /></SogouLogo>
      </Win>
    </>
  );
}
